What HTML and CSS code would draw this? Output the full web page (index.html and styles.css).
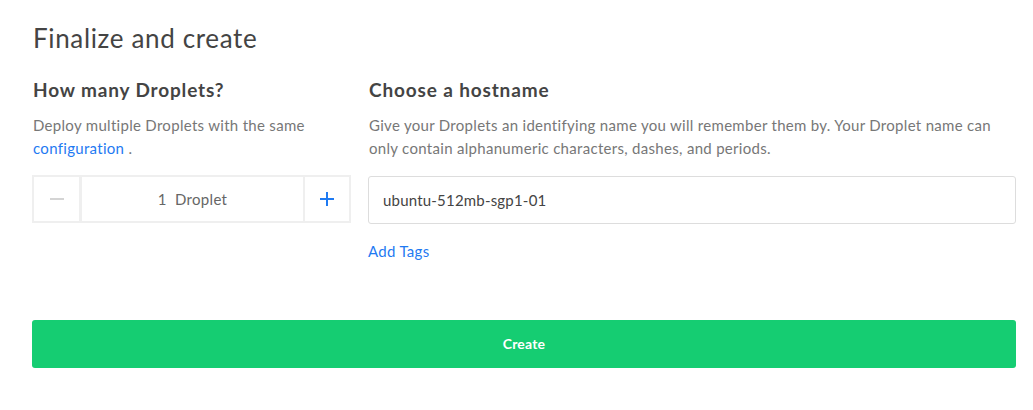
FILE: index.html
```html
<!DOCTYPE html>
<html>
<head>
<meta charset="utf-8">
<link rel="stylesheet" href="styles.css">
</head>
<body>
<div class="page">
  <h1 class="title">Finalize and create</h1>
  <div class="cols">
    <div class="col-left">
      <h2 class="heading">How many Droplets?</h2>
      <p class="desc">Deploy multiple Droplets with the same <a class="link" href="#">configuration</a> .</p>
      <div class="stepper">
        <div class="step-btn minus"><span class="minus-bar"></span></div>
        <div class="step-value">1&nbsp; Droplet</div>
        <div class="step-btn plus">
          <svg width="16" height="16" viewBox="0 0 16 16"><path d="M8 1v14M1 8h14" stroke="#1f7af2" stroke-width="2" fill="none"/></svg>
        </div>
      </div>
    </div>
    <div class="col-right">
      <h2 class="heading">Choose a hostname</h2>
      <p class="desc">Give your Droplets an identifying name you will remember them by. Your Droplet name can only contain alphanumeric characters, dashes, and periods.</p>
      <div class="input">ubuntu-512mb-sgp1-01</div>
      <a class="link tags" href="#">Add Tags</a>
    </div>
  </div>
  <button class="create">Create</button>
</div>
</body>
</html>
```
FILE: styles.css
```css
html, body { margin: 0; padding: 0; background: #fff; }
body { font-family: Lato, "Open Sans", sans-serif; color: #444; }
.page { padding: 22px 17px 0 32px; }
.title { margin: 0 0 0 1px; font-size: 26px; font-weight: 400; line-height: 32px; letter-spacing: 0.65px; color: #444; }
.cols { display: flex; gap: 17px; margin-top: 23px; }
.col-left { width: 319px; flex: none; }
.col-right { flex: 1; }
.heading { margin: 0 0 0 1px; font-size: 19px; font-weight: 700; line-height: 26px; letter-spacing: 0.85px; color: #444; }
.desc { margin: 11px 0 0 1px; font-size: 15px; line-height: 23px; letter-spacing: 0.3px; color: #777; }
.link { color: #1f7af2; text-decoration: none; }
.stepper { display: flex; height: 44px; margin-top: 15px; border: 2px solid #efefef; }
.step-btn { display: flex; align-items: center; justify-content: center; }
.minus { width: 45px; border-right: 3px solid #efefef; }
.plus { width: 44px; border-left: 2px solid #efefef; }
.minus-bar { width: 14px; height: 2px; background: #d4d4d4; }
.step-value { flex: 1; display: flex; align-items: center; justify-content: center; font-size: 15px; letter-spacing: 0.3px; color: #666; }
.input { margin-top: 16px; height: 46px; border: 1px solid #ddd; border-radius: 3px; display: flex; align-items: center; padding-left: 14px; font-size: 15px; letter-spacing: 0.2px; color: #444; }
.tags { display: inline-block; margin-top: 16px; font-size: 15px; line-height: 22px; letter-spacing: 0.3px; }
.create { display: block; width: 100%; height: 48px; margin-top: 58px; border: none; border-radius: 3px; background: #15cd72; color: #fff; font-family: Lato, sans-serif; font-size: 14px; font-weight: 700; letter-spacing: 0.2px; line-height: 46px; }
```
